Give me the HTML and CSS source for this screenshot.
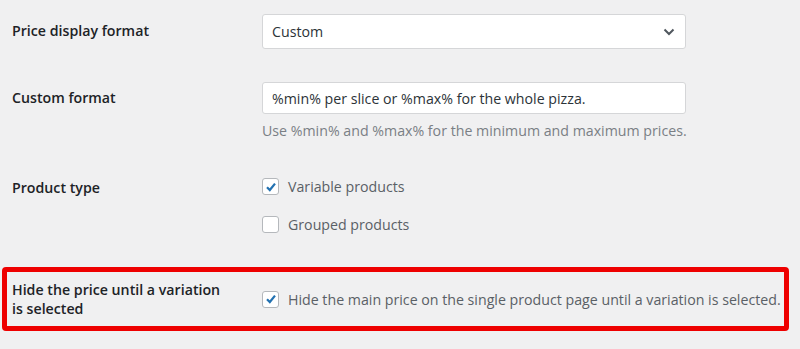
FILE: index.html
```html
<!DOCTYPE html>
<html>
<head>
<meta charset="utf-8">
<link rel="stylesheet" href="styles.css">
</head>
<body>
<div class="form">
  <div class="row row-select">
    <div class="label">Price display format</div>
    <div class="field">
      <div class="select">
        <span>Custom</span>
        <svg class="chev" width="12" height="8" viewBox="0 0 12 8"><path d="M1.5 1.5 L6 6 L10.5 1.5" fill="none" stroke="#50575e" stroke-width="2"/></svg>
      </div>
    </div>
  </div>
  <div class="row row-input">
    <div class="label">Custom format</div>
    <div class="field">
      <div class="input">%min% per slice or %max% for the whole pizza.</div>
      <div class="help">Use %min% and %max% for the minimum and maximum prices.</div>
    </div>
  </div>
  <div class="row row-type">
    <div class="label">Product type</div>
    <div class="field checks">
      <label class="check"><span class="box on"><svg width="14" height="14" viewBox="0 0 14 14"><path d="M3 7.2 L5.8 10 L11 3.6" fill="none" stroke="#2271b1" stroke-width="2.2"/></svg></span>Variable products</label>
      <label class="check"><span class="box"></span>Grouped products</label>
    </div>
  </div>
  <div class="row row-hide">
    <div class="label">Hide the price until a variation is selected</div>
    <div class="field">
      <label class="check"><span class="box on"><svg width="14" height="14" viewBox="0 0 14 14"><path d="M3 7.2 L5.8 10 L11 3.6" fill="none" stroke="#2271b1" stroke-width="2.2"/></svg></span>Hide the main price on the single product page until a variation is selected.</label>
    </div>
  </div>
</div>
</body>
</html>
```
FILE: styles.css
```css
html, body {
  margin: 0;
  padding: 0;
  background: #f0f0f1;
}
body {
  font-family: "Open Sans", "Noto Sans", sans-serif;
  font-size: 14.2px;
  color: #3c434a;
  width: 800px;
  height: 349px;
  overflow: hidden;
}
.form {
  display: flex;
  flex-direction: column;
  padding-top: 14px;
}
.row {
  display: grid;
  grid-template-columns: 250px 424px;
  padding-left: 12px;
}
.label {
  font-weight: 600;
  color: #1d2327;
  line-height: 19px;
}
.row-select .label { padding-top: 7px; }
.select {
  height: 33px;
  border: 1px solid #d5d6d8;
  border-radius: 3px;
  background: #fff;
  display: flex;
  align-items: center;
  justify-content: space-between;
  padding: 0 10px 0 9px;
  color: #2c3338;
}
.chev { display: block; }
.row-input { margin-top: 33px; }
.row-input .label { padding-top: 6px; }
.input {
  height: 30px;
  border: 1px solid #d5d6d8;
  border-radius: 3px;
  background: #fff;
  display: flex;
  align-items: center;
  padding: 0 9px;
  color: #2c3338;
}
.help {
  margin-top: 7px;
  color: #7a7f85;
  line-height: 19px;
  white-space: nowrap;
}
.row-type { margin-top: 37px; }
.row-type .label { padding-top: 1px; }
.checks {
  display: flex;
  flex-direction: column;
  gap: 19px;
}
.check {
  display: flex;
  align-items: center;
  gap: 9px;
  line-height: 19px;
  color: #5a6066;
  white-space: nowrap;
}
.box {
  width: 15px;
  height: 15px;
  border: 1px solid #b5b8bc;
  border-radius: 3px;
  background: #fff;
  display: flex;
  align-items: center;
  justify-content: center;
  flex: none;
}
.row-hide {
  margin: 33px 11px 0 2px;
  padding: 8px 0 8px 5px;
  border: 5px solid #ee0000;
  border-radius: 4px;
  grid-template-columns: 250px 1fr;
  align-items: center;
}
.row-hide .label { width: 215px; }
```
